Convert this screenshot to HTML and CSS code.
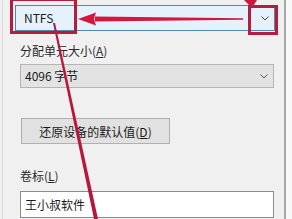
FILE: index.html
```html
<!DOCTYPE html>
<html lang="zh-CN">
<head>
<meta charset="utf-8">
<link rel="stylesheet" href="styles.css">
</head>
<body>
<div class="window">
  <div class="panel">
    <div class="combo combo-focus">
      <span class="value">NTFS</span>
      <svg class="chev" width="8" height="5" viewBox="0 0 8 5"><path d="M0.5 0.5 L4 4 L7.5 0.5" fill="none" stroke="#444" stroke-width="1"/></svg>
    </div>
    <div class="label">分配单元大小(<u>A</u>)</div>
    <div class="combo combo-grey">
      <span class="value">4096 字节</span>
      <svg class="chev" width="8" height="5" viewBox="0 0 8 5"><path d="M0.5 0.5 L4 4 L7.5 0.5" fill="none" stroke="#555" stroke-width="1"/></svg>
    </div>
    <div class="button">还原设备的默认值(<u>D</u>)</div>
    <div class="label label2">卷标(<u>L</u>)</div>
    <div class="textbox">王小叔软件</div>
  </div>
  <div class="edge"></div>
  <div class="outside"></div>
  <svg class="annot" width="292" height="219" viewBox="0 0 292 219">
    <polygon points="53,23 55,23 98,219 94,219" fill="#b8163a"/>
    <rect x="11.5" y="-0.5" width="64" height="33" fill="none" stroke="#b71c3e" stroke-width="3"/>
    <rect x="249.5" y="6.5" width="27" height="27" fill="none" stroke="#b71c3e" stroke-width="3"/>
    <polygon points="95,16.5 243,18.3 243,19.7 95,21.5" fill="#d31840"/>
    <polygon points="78,19 96,12.5 94,19 96,25.5" fill="#d31840"/>
    <polygon points="244,0 257,0 252,8" fill="#c81a3e"/>
  </svg>
</div>
</body>
</html>
```
FILE: styles.css
```css
html, body {
  margin: 0;
  padding: 0;
}
body {
  width: 292px;
  height: 219px;
  overflow: hidden;
  background: #f0f0f0;
  font-family: "Noto Sans CJK SC", "Noto Sans", sans-serif;
  font-size: 12px;
  color: #1a1a1a;
}
.window {
  position: relative;
  display: flex;
  width: 292px;
  height: 219px;
}
.panel {
  flex: 0 0 282px;
  display: flex;
  flex-direction: column;
  padding-left: 17px;
  box-sizing: border-box;
  border-left: 1px solid #d9d9d9;
  margin-left: 2px;
}
.edge {
  flex: 0 0 2px;
  background: #a8a8a8;
}
.outside {
  flex: 1 1 auto;
  background: #f8f8f8;
}
.combo {
  display: flex;
  align-items: center;
  justify-content: space-between;
  box-sizing: border-box;
  padding: 0 5px 0 4px;
  width: 254px;
}
.combo-focus {
  margin-top: 5px;
  margin-left: -5px;
  width: 260px;
  height: 26px;
  border: 1px solid #4f8ba8;
  background: #e5f1fb;
  padding-left: 8px;
}
.combo-grey {
  margin-top: 5px;
  height: 24px;
  border: 1px solid #b4b4b4;
  background: #e3e3e3;
}
.value {
  line-height: 16px;
}
.label {
  margin-top: 12px;
  line-height: 16px;
  color: #2a2a2a;
}
.label2 {
  margin-top: 24px;
}
.button {
  margin-top: 30px;
  margin-left: 1px;
  width: 149px;
  height: 26px;
  box-sizing: border-box;
  border: 1px solid #b0b0b0;
  background: #e1e1e1;
  display: flex;
  align-items: center;
  justify-content: center;
  color: #1a1a1a;
}
.textbox {
  margin-top: 7px;
  width: 254px;
  height: 27px;
  box-sizing: border-box;
  border: 1px solid #8a8a8a;
  background: #ffffff;
  padding-left: 4px;
  display: flex;
  align-items: center;
}
.annot {
  position: absolute;
  left: 0;
  top: 0;
  pointer-events: none;
}
```
